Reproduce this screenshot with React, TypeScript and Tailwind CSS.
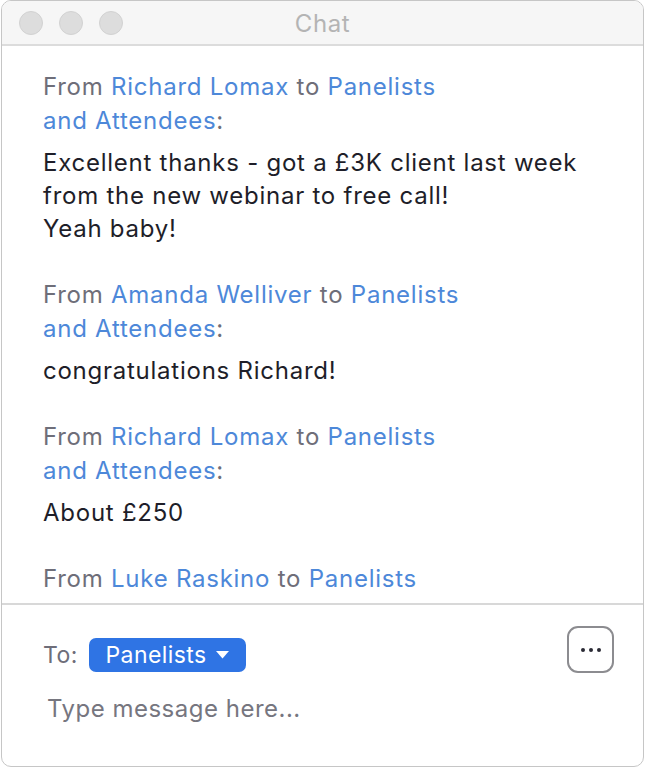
import React from "react";

type Msg = { from: string; body: string[] };

const msgs: Msg[] = [
  { from: "Richard Lomax", body: ["Excellent thanks - got a £3K client last week from the new webinar to free call!", "Yeah baby!"] },
  { from: "Amanda Welliver", body: ["congratulations Richard!"] },
  { from: "Richard Lomax", body: ["About £250"] },
  { from: "Luke Raskino", body: ["Hi all"] },
];

export default function App() {
  return (
    <div className="w-[646px] h-[768px] bg-white pl-px" style={{ fontFamily: "Inter, 'Noto Sans', sans-serif" }}>
      <div className="w-[643px] h-[767px] border border-[#c6c6c6] rounded-[10px] overflow-hidden flex flex-col bg-white">
        <div className="h-[45px] shrink-0 bg-[#f6f6f6] border-b-2 border-[#dcdcdc] flex items-center relative">
          <div className="flex gap-[16px] pl-[17px]">
            <div className="w-[24px] h-[24px] rounded-full bg-[#dddddd] border border-[#d2d2d2]" />
            <div className="w-[24px] h-[24px] rounded-full bg-[#dddddd] border border-[#d2d2d2]" />
            <div className="w-[24px] h-[24px] rounded-full bg-[#dddddd] border border-[#d2d2d2]" />
          </div>
          <div className="absolute inset-0 flex items-center justify-center pt-[2px] text-[24px] tracking-[0.6px] text-[#b4b4b4]">Chat</div>
        </div>
        <div className="h-[559px] shrink-0 overflow-hidden border-b-2 border-[#d8d8d8] pl-[41px] pt-[24px]">
          {msgs.map((m, i) => (
            <div key={i} className="mb-[33px]">
              <div className="w-[420px] text-[24px] leading-[34px] tracking-[0.75px] text-[#6e6e79]">
                From <span className="text-[#4d88d9]">{m.from}</span> to <span className="text-[#4d88d9]">Panelists and Attendees</span>:
              </div>
              <div className="mt-[8px] w-[570px] text-[24px] leading-[33px] tracking-[0.75px] text-[#1e1e29]">
                {m.body.map((b, j) => (
                  <div key={j}>{b}</div>
                ))}
              </div>
            </div>
          ))}
        </div>
        <div className="flex-1 pl-[41px] pr-[29px] pt-[21px]">
          <div className="flex items-center justify-between">
            <div className="flex items-center gap-[11px] pt-[11px]">
              <span className="text-[23px] leading-[30px] tracking-[0.5px] text-[#6e6e79]">To:</span>
              <div className="h-[34px] w-[157px] rounded-[7px] bg-[#2f74e4] flex items-center justify-center gap-[10px] text-white text-[23px] tracking-[0.4px]">
                <span>Panelists</span>
                <svg width="13" height="8" viewBox="0 0 13 8"><path d="M0 0 L13 0 L6.5 7.5 Z" fill="white" /></svg>
              </div>
            </div>
            <div className="w-[47px] h-[47px] rounded-[11px] border-2 border-[#8c8c90] flex items-center justify-center gap-[4px]">
              <div className="w-[4px] h-[4px] rounded-full bg-[#2a2a35]" />
              <div className="w-[4px] h-[4px] rounded-full bg-[#2a2a35]" />
              <div className="w-[4px] h-[4px] rounded-full bg-[#2a2a35]" />
            </div>
          </div>
          <div className="mt-[18px] pl-[4px] text-[24px] tracking-[0.5px] text-[#76767f]">Type message here...</div>
        </div>
      </div>
    </div>
  );
}
